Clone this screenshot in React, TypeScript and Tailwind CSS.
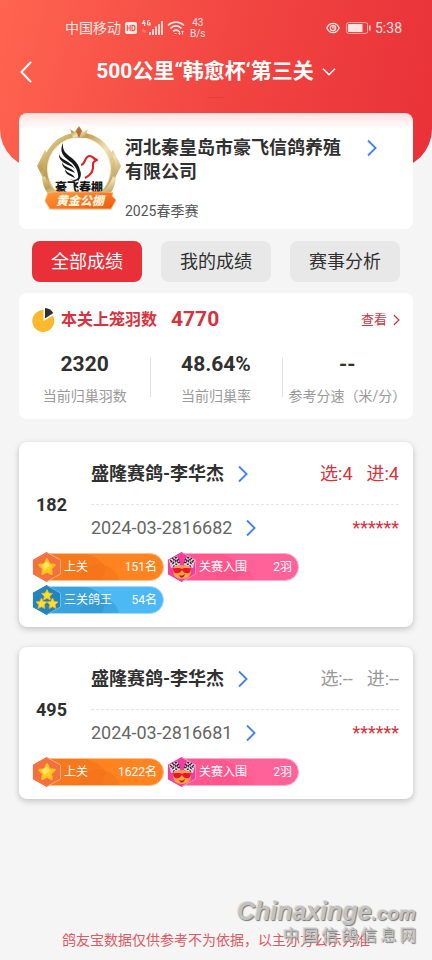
import React from "react";

type BadgeKind = "star" | "race" | "king";
type Badge = { kind: BadgeKind; label: string; value: string };
type RecordItem = {
  rank: string;
  owner: string;
  ring: string;
  picked: string;
  entered: string;
  active: boolean;
  badges: Badge[];
};

const records: RecordItem[] = [
  {
    rank: "182",
    owner: "盛隆赛鸽-李华杰",
    ring: "2024-03-2816682",
    picked: "选:4",
    entered: "进:4",
    active: true,
    badges: [
      { kind: "star", label: "上关", value: "151名" },
      { kind: "race", label: "关赛入围", value: "2羽" },
      { kind: "king", label: "三关鸽王", value: "54名" },
    ],
  },
  {
    rank: "495",
    owner: "盛隆赛鸽-李华杰",
    ring: "2024-03-2816681",
    picked: "选:--",
    entered: "进:--",
    active: false,
    badges: [
      { kind: "star", label: "上关", value: "1622名" },
      { kind: "race", label: "关赛入围", value: "2羽" },
    ],
  },
];

const stats = [
  { value: "2320", label: "当前归巢羽数" },
  { value: "48.64%", label: "当前归巢率" },
  { value: "--", label: "参考分速（米/分）" },
];

function Chevron({ className }: { className: string }) {
  return (
    <svg viewBox="0 0 10 18" fill="none" stroke="currentColor" strokeWidth="1.8" className={className} aria-hidden="true">
      <path d="M1 1.5 8.6 9 1 16.5" />
    </svg>
  );
}

function StatusBar() {
  return (
    <div className="flex h-14 items-center pr-[30px] pl-[65px] text-sm text-white/85">
      <span>中国移动</span>
      <svg viewBox="0 0 12 12" className="ml-1 h-3 w-3" aria-hidden="true">
        <rect width="12" height="12" rx="2" fill="#ffe9e5" />
        <path d="M2.3 3v6M5.2 3v6M2.3 6h2.9M7 3.4v5.2h1c1.300 0 2-1 2-2.600s-.7-2.600-2-2.600z" fill="none" stroke="#f2544a" strokeWidth="1.1" />
      </svg>
      <svg viewBox="0 0 22 16" className="ml-1 h-4 w-[22px]" aria-hidden="true">
        <path d="M3.500 0 1.500 3.500h3M3.700 2v4M9 .5H7.200c-.8.600-.8 4 0 4.500H9V3H8" fill="none" stroke="#ffe9e5" strokeWidth="1.200" />
        <path d="M2 9v3M4 10v3" stroke="#ff9e90" strokeWidth=".8" />
        <path d="M9 12v3M12 9v6M15 6.500V15M18 4v11M21 1v14" stroke="#ffe9e5" strokeWidth="1.700" />
      </svg>
      <svg viewBox="0 0 18 16" className="ml-1 h-4 w-[18px]" fill="none" stroke="#ffe9e5" strokeWidth="1.700" aria-hidden="true">
        <path d="M1 5.500C5.500 .9 12.500 .9 17 5.500M3.500 8.500c3.300-3.500 7.700-3.500 11 0M6.200 11.300c1.600-1.600 4-1.600 5.600 0" />
        <path d="M7.500 13.500h2M12.500 11v3.500m-1-1 1 1 1-1M15.500 14.500V11m-1 1 1-1 1 1" strokeWidth="1" />
      </svg>
      <span className="ml-[5px] text-center text-[10px] leading-[11px]">
        43
        <br />
        B/s
      </span>
      <svg viewBox="0 0 14 12" className="ml-auto h-3 w-[14px]" fill="none" stroke="#ffe9e5" aria-hidden="true">
        <path d="M.8 6C3.500-.2 10.500-.2 13.200 6 10.500 12.200 3.500 12.200.8 6z" strokeWidth="1.300" />
        <circle cx="7" cy="6" r="2.700" strokeWidth="1.200" />
        <path d="M7 4v2h2" strokeWidth="1.200" />
      </svg>
      <svg viewBox="0 0 25 12" className="ml-[6px] h-3 w-[25px]" aria-hidden="true">
        <rect x=".6" y=".6" width="21" height="10.800" rx="2" fill="none" stroke="#ffb3ae" />
        <rect x="2" y="2" width="14.500" height="8" fill="#ffe3e0" />
        <path d="M23.800 3.500v5" stroke="#ffe3e0" strokeWidth="1.500" />
      </svg>
      <span className="ml-1">5:38</span>
    </div>
  );
}

function ClubLogo() {
  return (
    <svg viewBox="0 0 86 88" className="h-[88px] w-[86px] shrink-0" role="img" aria-label="豪飞春棚 黄金公棚">
      <defs>
        <linearGradient id="gold" x1="0" y1="0" x2="1" y2="1">
          <stop offset="0" stopColor="#e9d69a" />
          <stop offset=".3" stopColor="#bd9c50" />
          <stop offset=".55" stopColor="#f1e2b2" />
          <stop offset="1" stopColor="#a98438" />
        </linearGradient>
        <linearGradient id="ribbon" x1="0" y1="0" x2="1" y2="1">
          <stop offset="0" stopColor="#ff9b38" />
          <stop offset="1" stopColor="#ef5713" />
        </linearGradient>
      </defs>
      <path d="M9 26 1 42l10 20 4-3-8-17 5-12zM77 26l8 16-10 20-4-3 8-17-5-12z" fill="url(#gold)" />
      <circle cx="43" cy="45" r="34" fill="#fff" stroke="url(#gold)" strokeWidth="5" />
      <circle cx="43" cy="45" r="31.500" fill="none" stroke="#f5edcf" strokeWidth="1" />
      <path d="m34 5 4.500 3L43 2l4.500 6L52 5l-3 9H37z" fill="url(#gold)" />
      <path d="m40 7 3 7 3-7-3-4z" fill="#b86e3e" />
      <g fill="#15171b">
        <path d="M27 19c-1 9 4 11 10 16 8 7 9 15 5 23 1-8-1-14-6-19-6-5-14-9-9-20z" />
        <path d="M23 29c0 7 11 7 16 16-5-5-17-5-16-16zM26 38c2 6 10 5 13 11-5-3-13-3-13-11zM29 45c2 5 8 4 10 9-4-2-10-3-10-9z" />
        <path d="M34 55c6 3 11-2 10-9 3 7-2 15-10 9z" />
      </g>
      <path d="M49 54c6-3 9-8 8-14 0-2 1-3 4-4-4-1-4-4-7-4-6 0-4 8-9 9" fill="none" stroke="#e02229" strokeWidth="2.200" strokeLinejoin="round" />
      <text x="43" y="68" textAnchor="middle" fontSize="12" fontWeight="900" fill="#15171b">豪飞春棚</text>
      <path d="M9 52c3 9 8 14 16 18l-8 4C10 70 7 62 6 54zM77 52c-3 9-8 14-16 18l8 4c7-4 10-12 11-20z" fill="url(#gold)" />
      <path d="M17 68h53l7 1-1 3 4 4-5 9H14l-5-8 3-8z" fill="url(#ribbon)" stroke="#ffb468" />
      <text x="44" y="81" textAnchor="middle" fontSize="12" fontWeight="800" fontStyle="italic" fill="#fff3dc">黄金公棚</text>
    </svg>
  );
}

const STAR = "M0-5.500 1.700-2 5.500-1.500 2.700 1.200 3.400 5 0 3.200-3.400 5-2.700 1.200-5.500-1.500-1.700-2z";

function BadgeIcon({ kind }: { kind: BadgeKind }) {
  const fill = { star: "#f3703f", race: "#ef3e9b", king: "#2184bd" }[kind];
  const light = { star: "#fdb07c", race: "#fb8fc8", king: "#6cbde6" }[kind];
  return (
    <svg viewBox="0 0 30 30" className="h-[30px] w-[30px] shrink-0" aria-hidden="true">
      <path d="M15 .5 28.500 8v14L15 29.500 1.500 22V8z" fill={fill} stroke={light} />
      <path d="M15 .5 1.500 8v14L15 29.500" fill="none" stroke={fill} strokeWidth="1.200" />
      {kind === "star" && (
        <g transform="translate(15 15) scale(1.4)">
          <path d={STAR} fill="#ffcf26" stroke="#ffc021" strokeWidth="1.500" strokeLinejoin="round" />
          <path d="M-4-1 0-4 2-1-2 2z" fill="#ffe65a" />
        </g>
      )}
      {kind === "king" && (
        <g fill="#ffdc2e" stroke="#f5b81a" strokeWidth=".8" strokeLinejoin="round">
          <path d={STAR} transform="translate(15 10)" />
          <path d={STAR} transform="translate(9.5 18.500)" />
          <path d={STAR} transform="translate(20.5 18.500)" />
        </g>
      )}
      {kind === "race" && (
        <g>
          <path d="m2 8 8-4 3 9-9 3z" fill="#f4dcea" />
          <path d="m28 8-8-4-3 9 9 3z" fill="#f4dcea" />
          <path d="m3 8 7 5M5 6l7 5M8 5l4 6M10 5l-7 6M12 7l-8 6M13 10l-8 5M27 8l-7 5M25 6l-7 5M22 5l-4 6M20 5l7 6M18 7l8 6M17 10l8 5" stroke="#35263a" strokeWidth="1.200" strokeDasharray="2 1.2" />
          <path d="M6 17c2-5 16-5 18 0 1 6-3 10-9 10S5 23 6 17z" fill="#ffa044" />
          <path d="M6 16c2 1 6-1 9 1 3-2 7 0 9-1 0 4-2 6-5 5-2 0-3-2-4-3-1 1-2 3-4 3-3 1-5-1-5-5z" fill="#e8152d" />
          <path d="M12 23c2 1 4 1 6-1-1 4-4 5-6 1z" fill="#8d2318" />
        </g>
      )}
    </svg>
  );
}

const pillStyles: Record<BadgeKind, { track: string; tint: string }> = {
  star: { track: "bg-[#ff8420] border-[#ffc08a]", tint: "#f4701a" },
  race: { track: "bg-[#ff6298] border-[#ffafcb]", tint: "#ff5289" },
  king: { track: "bg-[#4cb9f4] border-[#a9dcfa]", tint: "#2f95cd" },
};

function BadgePill({ badge }: { badge: Badge }) {
  const style = pillStyles[badge.kind];
  return (
    <li className="relative flex h-[30px] w-[132px] items-center text-xs text-white">
      <div className={`absolute inset-y-px right-0 left-3 overflow-hidden rounded-r-full border ${style.track}`}>
        <svg viewBox="0 0 118 28" className="h-full w-full" preserveAspectRatio="none" aria-hidden="true">
          <path d="M0 0h38c10 0 20 8 23 15l-4 13H0z" fill={style.tint} opacity=".6" />
          <circle cx="54" cy="31" r="20" fill={style.tint} opacity=".5" />
        </svg>
      </div>
      <div className="relative flex w-full items-center pr-[7px]">
        <BadgeIcon kind={badge.kind} />
        <span className="ml-[2px]">{badge.label}</span>
        <span className="ml-auto">{badge.value}</span>
      </div>
    </li>
  );
}

function RecordCard({ record }: { record: RecordItem }) {
  return (
    <article className="rounded-lg bg-white pt-[14px] pr-[14px] pb-3 pl-[13px] shadow-[0_2px_6px_rgba(0,0,0,0.22)]">
      <div className="flex items-center">
        <div className="w-[59px] shrink-0 pt-1 pl-1 text-lg font-bold">{record.rank}</div>
        <div className="min-w-0 flex-1">
          <div className="flex h-[49px] items-start justify-between border-b border-dashed border-[#e6e6e6] text-lg leading-9">
            <button type="button" className="flex items-center gap-[14px] font-bold">
              {record.owner}
              <Chevron className="h-[18px] w-[10px] text-[#4480f0]" />
            </button>
            <div className={`flex gap-[14px] ${record.active ? "text-[#d7323d]" : "text-[#999]"}`}>
              <span>{record.picked}</span>
              <span>{record.entered}</span>
            </div>
          </div>
          <div className="flex h-[45px] items-center justify-between text-lg">
            <button type="button" className="flex items-center gap-[14px] text-[#666]">
              {record.ring}
              <Chevron className="h-[18px] w-[10px] text-[#4480f0]" />
            </button>
            <span className="text-[#d7323d]">******</span>
          </div>
        </div>
      </div>
      <ul className="mt-[2px] flex flex-wrap gap-x-[3px] gap-y-[3px]">
        {record.badges.map((b) => (
          <BadgePill key={b.label} badge={b} />
        ))}
      </ul>
    </article>
  );
}

export default function App() {
  return (
    <div className="relative flex min-h-screen flex-col bg-[#f5f5f5] font-[Roboto,'Noto_Sans_CJK_SC',sans-serif] text-[#303030]">
      <header className="h-[169px] rounded-b-[40px] bg-[linear-gradient(105deg,#ff6550_0%,#f24642_50%,#e83138_100%)] text-white">
        <StatusBar />
        <div className="flex h-8 items-center px-5">
          <button type="button" aria-label="返回" className="w-5">
            <svg viewBox="0 0 12 22" fill="none" stroke="currentColor" strokeWidth="2" strokeLinecap="round" className="h-[22px] w-3" aria-hidden="true">
              <path d="M10.500 1.500 1.500 11l9 9.500" />
            </svg>
          </button>
          <h1 className="flex-1 text-center text-[21px] font-bold">
            <button type="button" className="inline-flex items-center gap-2">
              500公里“韩愈杯‘第三关
              <svg viewBox="0 0 14 8" fill="none" stroke="currentColor" strokeWidth="1.500" className="h-2 w-[14px]" aria-hidden="true">
                <path d="m1 .8 6 6 6-6" />
              </svg>
            </button>
          </h1>
          <span className="w-5" />
        </div>
        <div className="mx-auto mt-[9px] h-px w-4 bg-[#d93b3c]/60" />
      </header>

      <main className="-mt-14 px-[19px]">
        <section className="flex h-[116px] rounded-lg bg-[linear-gradient(#ffdfdf_0,#fff_16px)] pr-9 pl-[17px]">
          <div className="mt-[11px]">
            <ClubLogo />
          </div>
          <div className="ml-[3px] flex-1 pt-[23px]">
            <h2 className="text-lg leading-6 font-bold">河北秦皇岛市豪飞信鸽养殖有限公司</h2>
            <p className="mt-[17px] text-sm leading-5 text-[#555]">2025春季赛</p>
          </div>
          <button type="button" aria-label="公棚详情" className="mt-[26px] ml-5 flex h-[18px] shrink-0 text-[#4480f0]">
            <Chevron className="h-[18px] w-[10px]" />
          </button>
        </section>

        <nav className="mt-3 grid grid-cols-3 gap-[19px] px-[13px] text-lg">
          <button type="button" aria-current="page" className="h-[41px] rounded-lg bg-[#e92f38] pt-px text-white">全部成绩</button>
          <button type="button" className="h-[41px] rounded-lg bg-[#e8e8e8] pt-px">我的成绩</button>
          <button type="button" className="h-[41px] rounded-lg bg-[#e8e8e8] pt-px">赛事分析</button>
        </nav>

        <section className="mt-[11px] h-[126px] rounded-lg bg-white px-[13px] pt-3">
          <div className="flex h-[30px] items-center text-[#d7323d]">
            <svg viewBox="0 0 24 24" className="h-6 w-6" aria-hidden="true">
              <path d="M11.500 2v11l9.300-5.500A11 11 0 1 1 11.500 2z" fill="#fcb92d" />
              <path d="M13 0c4 .2 6.500 2 8.300 5L13 10.500z" fill="#2f3036" />
            </svg>
            <h2 className="ml-[5px] text-base font-bold">本关上笼羽数</h2>
            <strong className="ml-[14px] text-[21px] font-bold">4770</strong>
            <button type="button" className="ml-auto flex items-center gap-[6px] text-[13px]">
              查看
              <Chevron className="h-3 w-[7px]" />
            </button>
          </div>
          <dl className="mt-[15px] -mr-[13px] -ml-[13px] grid grid-cols-3 text-center">
            {stats.map((s) => (
              <div key={s.label} className="relative flex flex-col-reverse gap-2 not-first:before:absolute not-first:before:top-2 not-first:before:left-0 not-first:before:h-[39px] not-first:before:w-px not-first:before:bg-[#e2e2e2]">
                <dt className="text-sm leading-5 whitespace-nowrap text-[#999]">{s.label}</dt>
                <dd className="text-[21px] leading-7 font-bold">{s.value}</dd>
              </div>
            ))}
          </dl>
        </section>

        <section className="mt-[23px] flex flex-col gap-5" aria-label="成绩列表">
          {records.map((r) => (
            <RecordCard key={r.ring} record={r} />
          ))}
        </section>
      </main>

      <footer className="mt-auto pt-8 pb-[10px] text-center text-sm leading-5 text-[#df5963]">
        鸽友宝数据仅供参考不为依据，以主办方公示为准
      </footer>

      <div className="pointer-events-none absolute right-4 bottom-[14px] text-right text-[#c2c2c2] [text-shadow:1px_1px_1px_#777,-1px_-1px_0_#ddd]">
        <div className="font-['Liberation_Sans',sans-serif] text-[25px] leading-6 font-bold italic">
          Chinaxinge<span className="text-[19px]">.com</span>
        </div>
        <div className="flex justify-between pl-[46px] text-base leading-5">
          {Array.from("中国信鸽信息网").map((c, i) => (
            <span key={i}>{c}</span>
          ))}
        </div>
      </div>
    </div>
  );
}
